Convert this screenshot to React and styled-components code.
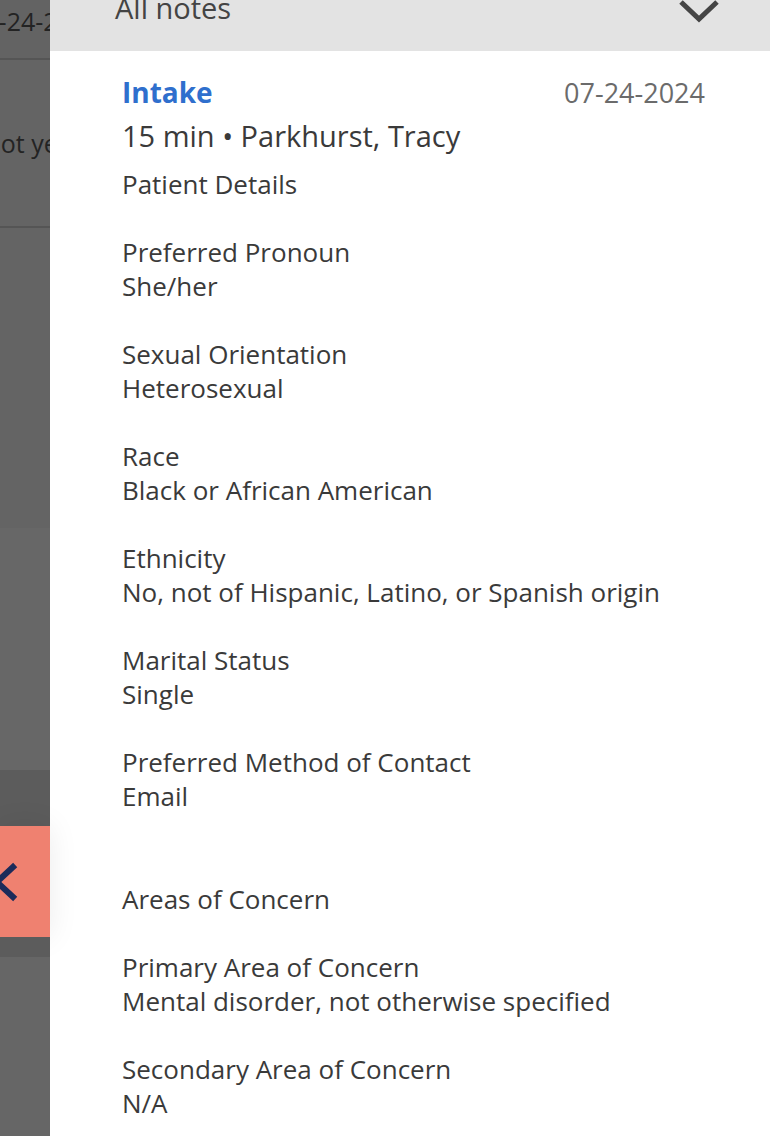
import React from "react";
import styled, { createGlobalStyle } from "styled-components";

const GlobalStyle = createGlobalStyle`
  html, body { margin: 0; padding: 0; background: #ffffff; }
  body { font-family: "Open Sans", Lato, Arial, sans-serif; overflow: hidden; }
  * { box-sizing: border-box; }
`;

const fields = [
  { label: "Preferred Pronoun", value: "She/her" },
  { label: "Sexual Orientation", value: "Heterosexual" },
  { label: "Race", value: "Black or African American" },
  { label: "Ethnicity", value: "No, not of Hispanic, Latino, or Spanish origin" },
  { label: "Marital Status", value: "Single" },
  { label: "Preferred Method of Contact", value: "Email" },
];

const concerns = [
  { label: "Primary Area of Concern", value: "Mental disorder, not otherwise specified" },
  { label: "Secondary Area of Concern", value: "N/A" },
];

export default function App() {
  return (
    <>
      <GlobalStyle />
      <Screen>
        <Backdrop>
          <BackRow height={58} tone="#636363">
            <BackText offset={-30} top={6}>07-24-2024</BackText>
          </BackRow>
          <Divider />
          <BackRow height={166} tone="#646464">
            <BackText offset={-18} top={68}>Not yet signed</BackText>
          </BackRow>
          <Divider />
          <BackRow height={300} tone="#646464" />
          <BackRow height={242} tone="#676767" />
          <BackRow height={56} tone="#5c5c5c" />
          <ToggleButton aria-label="Back">
            <svg width="24" height="40" viewBox="0 0 24 40">
              <path d="M13 5 L-3 20 L13 35" fill="none" stroke="#1c2b5a" strokeWidth="6" strokeLinecap="square" />
            </svg>
          </ToggleButton>
          <BackRow height={20} tone="#5c5c5c" />
          <BackRow height={200} tone="#666666" />
        </Backdrop>

        <Panel>
          <FilterBar>
            <FilterLabel>All notes</FilterLabel>
            <svg width="42" height="24" viewBox="0 0 42 24">
              <path d="M3 3 L21 20 L39 3" fill="none" stroke="#444" strokeWidth="5" />
            </svg>
          </FilterBar>

          <Note>
            <NoteHead>
              <NoteTitle>Intake</NoteTitle>
              <NoteDate>07-24-2024</NoteDate>
            </NoteHead>
            <NoteMeta>15 min • Parkhurst, Tracy</NoteMeta>
            <SectionTitle>Patient Details</SectionTitle>

            <FieldList>
              {fields.map((f) => (
                <Field key={f.label}>
                  <Line>{f.label}</Line>
                  <Line>{f.value}</Line>
                </Field>
              ))}
            </FieldList>

            <SectionTitle spaced>Areas of Concern</SectionTitle>
            <FieldList>
              {concerns.map((f) => (
                <Field key={f.label}>
                  <Line>{f.label}</Line>
                  <Line>{f.value}</Line>
                </Field>
              ))}
            </FieldList>
          </Note>
        </Panel>
      </Screen>
    </>
  );
}

const Screen = styled.div`
  display: flex;
  width: 770px;
  height: 1136px;
  overflow: hidden;
`;

const Backdrop = styled.div`
  width: 50px;
  flex: none;
  display: flex;
  flex-direction: column;
  background: #666666;
  position: relative;
  z-index: 2;
`;

const BackRow = styled.div`
  height: ${(p) => p.height}px;
  flex: none;
  background: ${(p) => p.tone};
  overflow: hidden;
`;

const BackText = styled.div`
  margin: ${(p) => p.top}px 0 0 ${(p) => p.offset}px;
  white-space: nowrap;
  font-size: 25px;
  line-height: 30px;
  color: #232323;
`;

const Divider = styled.div`
  height: 2px;
  flex: none;
  background: #555555;
`;

const ToggleButton = styled.button`
  height: 111px;
  width: 50px;
  flex: none;
  border: 0;
  padding: 0;
  background: #ef8170;
  display: flex;
  align-items: center;
  box-shadow: 0 0 30px rgba(0, 0, 0, 0.08);
`;

const Panel = styled.div`
  flex: 1;
  background: #ffffff;
  position: relative;
  z-index: 1;
`;

const FilterBar = styled.div`
  margin-top: -29px;
  height: 80px;
  background: #e3e3e3;
  display: flex;
  align-items: center;
  justify-content: space-between;
  padding: 0 50px 0 65px;
`;

const FilterLabel = styled.span`
  font-size: 29px;
  line-height: 30px;
  margin-top: -6px;
  color: #444444;
`;

const Note = styled.div`
  padding: 22px 65px 0 72px;
  color: #3a3a3a;
`;

const NoteHead = styled.div`
  display: flex;
  justify-content: space-between;
  align-items: baseline;
`;

const NoteTitle = styled.span`
  font-size: 28px;
  font-weight: 700;
  color: #2f6fcd;
  line-height: 38px;
`;

const NoteDate = styled.span`
  font-size: 27px;
  color: #6b6b6b;
`;

const NoteMeta = styled.div`
  font-size: 29px;
  line-height: 42px;
  margin-top: 4px;
`;

const SectionTitle = styled.div`
  font-size: 26px;
  line-height: 34px;
  margin-top: ${(p) => (p.spaced ? "69px" : "10px")};
`;

const FieldList = styled.div`
  display: flex;
  flex-direction: column;
  gap: 34px;
  margin-top: 34px;
`;

const Field = styled.div`
  display: flex;
  flex-direction: column;
`;

const Line = styled.div`
  font-size: 26px;
  line-height: 34px;
`;
